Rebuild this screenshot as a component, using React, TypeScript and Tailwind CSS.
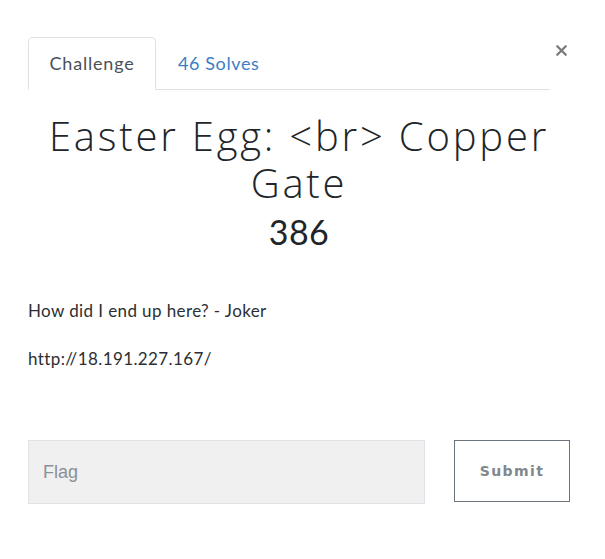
import { X } from 'lucide-react';

export default function App() {
  return (
    <div className="w-[605px] h-[559px] bg-white" style={{ fontFamily: 'Lato, sans-serif' }}>
      <div className="pl-[28px] pr-[35px] pt-[37px]">
        <div className="flex items-start">
          <div className="flex flex-1 border-b border-[#dee2e6]">
            <div className="-mb-px h-[53px] w-[128px] flex items-center justify-center rounded-t-[5px] border border-b-white border-[#dee2e6] bg-white text-[18px] tracking-[0.8px] text-[#495057]">
              Challenge
            </div>
            <div className="h-[52px] flex items-center pl-[22px] text-[18px] tracking-[0.6px] text-[#3c7dc4]">46 Solves</div>
          </div>
          <button className="ml-[3px] mt-[5px] text-[#7a7a7a]">
            <X size={17} strokeWidth={3.2} />
          </button>
        </div>

        <h1
          className="mt-[22px] text-center text-[40px] leading-[47px] font-light tracking-[2.8px] text-[#212529]"
          style={{ fontFamily: '"Open Sans", Lato, sans-serif' }}
        >
          Easter Egg: &lt;br&gt; Copper
          <br />
          Gate
        </h1>
        <div className="mt-[4px] text-center text-[34px] leading-[44px] tracking-[0.5px] text-[#212529]">386</div>

        <div className="mt-[44px] text-[17px] tracking-[0.4px] text-[#2b2f33]">How did I end up here? - Joker</div>
        <div className="mt-[22px] text-[17px] tracking-[0.4px] text-[#2b2f33]">http://18.191.227.167/</div>

        <div className="mt-[69px] flex items-start">
          <input
            placeholder="Flag"
            className="h-[64px] w-[397px] border border-[#dfe3e7] bg-[#f0f0f0] px-[14px] text-[18px] placeholder:text-[#8a9096] outline-none"
            style={{ fontFamily: '"Liberation Sans", Arial, sans-serif' }}
          />
          <button
            className="ml-[29px] h-[62px] w-[116px] border border-[#6c757d] bg-white text-[14px] font-bold tracking-[1.4px] text-[#80878d]"
            style={{ fontFamily: '"DejaVu Sans", sans-serif' }}
          >
            Submit
          </button>
        </div>
      </div>
    </div>
  );
}
